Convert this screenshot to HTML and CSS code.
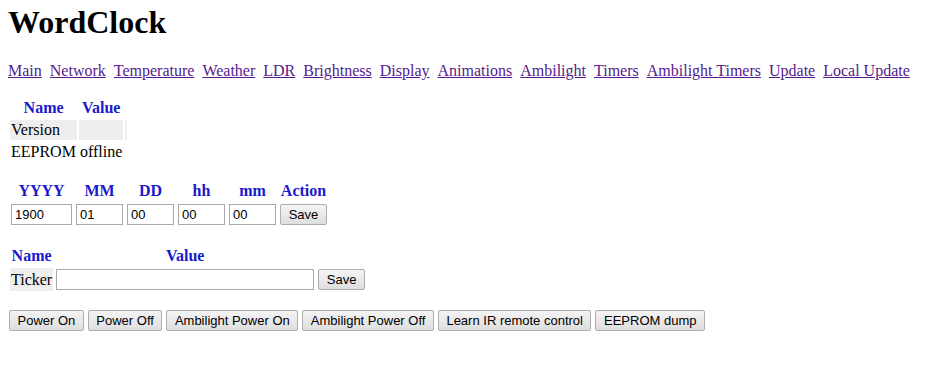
FILE: index.html
```html
<!DOCTYPE html>
<html lang="en">
<head>
    <meta charset="UTF-8">
    <meta name="viewport" content="width=device-width, initial-scale=1.0">
    <title>WordClock</title>
    <link rel="stylesheet" href="styles.css">
</head>
<body>
    <h1>WordClock</h1>
    <p class="menu">
        <a href="#">Main</a>
        <a href="#">Network</a>
        <a href="#">Temperature</a>
        <a href="#">Weather</a>
        <a href="#">LDR</a>
        <a href="#">Brightness</a>
        <a href="#">Display</a>
        <a href="#">Animations</a>
        <a href="#">Ambilight</a>
        <a href="#">Timers</a>
        <a href="#">Ambilight Timers</a>
        <a href="#">Update</a>
        <a href="#">Local Update</a>
    </p>

    <!-- Info -->
    <table class="info">
        <tr>
            <th class="col-name">Name</th>
            <th class="col-value">Value</th>
        </tr>
        <tr>
            <td class="cell">Version</td>
            <td class="cell"></td>
            <td class="cell edge"></td>
        </tr>
        <tr>
            <td colspan="2" class="nowrap">EEPROM offline</td>
        </tr>
    </table>

    <!-- Datum und Uhrzeit -->
    <form class="block date-form">
        <table>
            <tr>
                <th>YYYY</th>
                <th>MM</th>
                <th>DD</th>
                <th>hh</th>
                <th>mm</th>
                <th>Action</th>
            </tr>
            <tr>
                <td><input type="text" class="year" value="1900"></td>
                <td><input type="text" class="short" value="01"></td>
                <td><input type="text" class="short" value="00"></td>
                <td><input type="text" class="short" value="00"></td>
                <td><input type="text" class="short" value="00"></td>
                <td><button type="button" class="save">Save</button></td>
            </tr>
        </table>
    </form>

    <!-- Ticker -->
    <form class="block ticker-form">
        <table>
            <tr>
                <th>Name</th>
                <th>Value</th>
            </tr>
            <tr>
                <td class="cell">Ticker</td>
                <td><input type="text" class="ticker" value=""></td>
                <td><button type="button" class="save">Save</button></td>
            </tr>
        </table>
    </form>

    <div class="block actions">
        <button type="button">Power On</button>
        <button type="button">Power Off</button>
        <button type="button">Ambilight Power On</button>
        <button type="button">Ambilight Power Off</button>
        <button type="button">Learn IR remote control</button>
        <button type="button">EEPROM dump</button>
    </div>
</body>
</html>
```

FILE: styles.css
```css
body {
    font-family: "Liberation Serif", "Times New Roman", serif;
    font-size: 16px;
    color: #000;
    background-color: #fff;
    margin: 4px 8px 8px;
}

h1 {
    font-size: 32px;
    margin: 0;
}

.menu {
    margin: 21px 0 16px;
    display: flex;
    gap: 8px;
}

.menu a {
    color: #551a8b;
}

table {
    border-spacing: 2px;
}

th {
    color: #1a1acc;
    padding: 1px;
}

td {
    padding: 1px;
}

.cell {
    background-color: #eeeeee;
}

.nowrap {
    white-space: nowrap;
}

.col-name {
    width: 65px;
}

.col-value {
    width: 42px;
}

.edge {
    width: 0;
}

.block {
    margin: 14px 0 0;
}

.date-form {
    margin-top: 15px;
}

.ticker-form {
    margin-top: 16px;
}

input[type="text"] {
    box-sizing: border-box;
    height: 21px;
    margin: 0;
    padding: 1px 3px;
    font-family: "Liberation Sans", Arial, sans-serif;
    font-size: 13px;
    border: 1px solid #a9a9a9;
    display: block;
}

.year {
    width: 61px;
}

.short {
    width: 47px;
}

.ticker {
    width: 258px;
}

button {
    box-sizing: border-box;
    height: 21px;
    margin: 0;
    padding: 0 7.5px;
    font-family: "Liberation Sans", Arial, sans-serif;
    font-size: 13px;
    color: #000;
    background: linear-gradient(#f4f4f4, #dedede);
    border: 1px solid #adadad;
    border-radius: 2px;
}

.save {
    width: 47px;
    display: block;
    padding: 0;
}

.actions {
    margin-top: 17px;
    padding-left: 1px;
}
```
